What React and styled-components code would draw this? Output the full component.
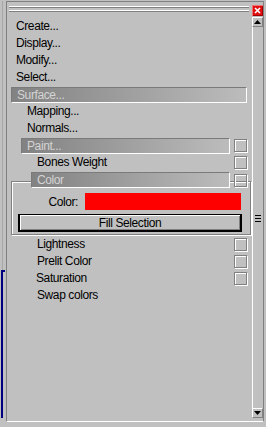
import React from 'react';
import styled, { createGlobalStyle } from 'styled-components';

const GlobalStyle = createGlobalStyle`
html, body {
  margin: 0;
  padding: 0;
  background: #c0c0c0;
}
`;

const Screen = styled.div`
width: 266px;
height: 427px;
padding-top: 1px;
box-sizing: border-box;
display: flex;
align-items: flex-start;
background: #c0c0c0;
overflow: hidden;
font-family: 'Liberation Sans', Arial, sans-serif;
font-size: 12px;
letter-spacing: -0.4px;
color: #000;
`;

const BackWindow = styled.div`
width: 6px;
height: 426px;
display: flex;
flex-direction: column;
`;

const BackEdge = styled.div`
height: 269px;
margin-left: 2px;
width: 1px;
background: #a8a8a8;
`;

const NavyFrame = styled.div`
width: 4px;
height: 148px;
box-sizing: border-box;
border-top: 2px solid #000080;
border-left: 2px solid #000080;
margin-left: 1px;
`;

const Rollout = styled.div`
width: 258px;
height: 421px;
box-sizing: border-box;
border-left: 1px solid #808080;
border-right: 1px solid #808080;
border-top: 1px solid #808080;
border-bottom: 1px solid #fff;
display: flex;
flex-direction: column;
`;

const TitleBar = styled.div`
height: 15px;
display: flex;
align-items: flex-start;
`;

const Grip = styled.div`
width: 240px;
margin: 4px 0 0 2px;
display: flex;
flex-direction: column;
gap: 2px;
`;

const GripLine = styled.div`
height: 2px;
box-sizing: border-box;
border-top: 1px solid #fff;
border-bottom: 1px solid #808080;
`;

const CloseButton = styled.div`
width: 11px;
height: 11px;
margin: 3px 0 0 3px;
display: flex;
`;

const Body = styled.div`
flex: 1;
display: flex;
`;

const Content = styled.div`
width: 245px;
padding-top: 1px;
display: flex;
flex-direction: column;
`;

const Row = styled.div`
height: 17px;
display: flex;
align-items: center;
justify-content: space-between;
`;

const Label = styled.span`
padding-left: ${p => 9 + p.$indent}px;
white-space: nowrap;
line-height: 17px;
`;

const RolloutBar = styled.div`
flex: ${p => (p.$wide ? 1 : 'none')};
width: ${p => (p.$wide ? 'auto' : `${219 - p.$level * 10}px`)};
height: 16px;
margin: 1px ${p => (p.$wide ? 5 : 0)}px 0 ${p => 4 + p.$level * 10}px;
box-sizing: border-box;
border-top: 1px solid #7a7a7a;
border-left: 1px solid #7a7a7a;
border-right: 1px solid #fff;
border-bottom: 1px solid #fff;
background: linear-gradient(to right, #828282, #bcbcbc);
color: #d4d4d4;
padding-left: 5px;
line-height: 14px;
white-space: nowrap;
`;

const Check = styled.div`
width: 14px;
height: 14px;
box-sizing: border-box;
margin-right: 4px;
margin-top: ${p => p.$drop || 0}px;
border: 1px solid;
border-color: #808080 #fff #fff #808080;
box-shadow: inset -1px -1px 0 #808080, inset 1px 1px 0 #fff;
`;

const ColorSection = styled.div`
display: flex;
flex-direction: column;
margin-bottom: 1px;
`;

const SectionHead = styled(Row)`
position: relative;
z-index: 1;
`;

const GroupBox = styled.div`
margin: -7px 1px 0 4px;
height: 54px;
box-sizing: border-box;
border: 1px solid #808080;
box-shadow: 1px 1px 0 #fff, inset 1px 1px 0 #fff;
display: flex;
flex-direction: column;
padding-top: 11px;
`;

const ColorField = styled.div`
height: 17px;
display: flex;
align-items: center;
gap: 7px;
`;

const FieldLabel = styled.span`
width: 66px;
text-align: right;
`;

const Swatch = styled.div`
width: 156px;
height: 17px;
background: ${p => p.$color};
`;

const FillButton = styled.div`
margin: 4px 0 0 6px;
width: 224px;
height: 18px;
box-sizing: border-box;
border: 1px solid #000;
border-left-width: 2px;
border-bottom-width: 2px;
border-right-width: 2px;
box-shadow: inset 1px 1px 0 #fff, inset -1px -1px 0 #808080;
display: flex;
align-items: center;
justify-content: center;
`;

const ScrollBar = styled.div`
width: 11px;
display: flex;
flex-direction: column;
padding-bottom: 3px;
`;

const ArrowButton = styled.div`
height: 10px;
box-sizing: border-box;
border-top: 1px solid #fff;
border-left: 1px solid #fff;
border-right: 1px solid #808080;
border-bottom: 1px solid #808080;
display: flex;
align-items: center;
justify-content: center;
`;

const Track = styled.div`
flex: 1;
box-sizing: border-box;
border-left: 1px solid #fff;
display: flex;
flex-direction: column;
align-items: center;
`;

const Thumb = styled.div`
margin-top: 188px;
display: flex;
flex-direction: column;
gap: 2px;
`;

const ThumbLine = styled.div`
width: 6px;
height: 1px;
background: #000;
`;

const Item = ({ indent = 0, check, children }) => (
  <Row>
    <Label $indent={indent}>{children}</Label>
    {check && <Check />}
  </Row>
);

const Triangle = ({ down }) => (
  <svg width="7" height="4" viewBox="0 0 7 4">
    <polygon points={down ? '0,0 7,0 3.5,4' : '0,4 7,4 3.5,0'} fill="#000" />
  </svg>
);

export default function App() {
  return (
    <>
      <GlobalStyle />
      <Screen>
        <BackWindow>
          <BackEdge />
          <NavyFrame />
        </BackWindow>
        <Rollout>
          <TitleBar>
            <Grip>
              <GripLine />
              <GripLine />
            </Grip>
            <CloseButton>
              <svg width="11" height="11" viewBox="0 0 11 11">
                <rect x="0" y="0" width="11" height="11" fill="#f07070" />
                <rect x="1" y="1" width="10" height="10" fill="#a00000" />
                <rect x="1" y="1" width="9" height="9" fill="#e01010" />
                <path d="M3 3 L8 8 M8 3 L3 8" stroke="#fff" strokeWidth="1.6" />
              </svg>
            </CloseButton>
          </TitleBar>
          <Body>
            <Content>
              <Item>Create...</Item>
              <Item>Display...</Item>
              <Item>Modify...</Item>
              <Item>Select...</Item>
              <Row>
                <RolloutBar $wide $level={0}>Surface...</RolloutBar>
              </Row>
              <Item indent={11}>Mapping...</Item>
              <Item indent={11}>Normals...</Item>
              <Row>
                <RolloutBar $level={1}>Paint...</RolloutBar>
                <Check />
              </Row>
              <Item indent={21} check>Bones Weight</Item>
              <ColorSection>
                <SectionHead>
                  <RolloutBar $level={2}>Color</RolloutBar>
                  <Check $drop={3} />
                </SectionHead>
                <GroupBox>
                  <ColorField>
                    <FieldLabel>Color:</FieldLabel>
                    <Swatch $color="#ff0000" />
                  </ColorField>
                  <FillButton>Fill Selection</FillButton>
                </GroupBox>
              </ColorSection>
              <Item indent={21} check>Lightness</Item>
              <Item indent={21} check>Prelit Color</Item>
              <Item indent={20} check>Saturation</Item>
              <Item indent={21}>Swap colors</Item>
            </Content>
            <ScrollBar>
              <ArrowButton><Triangle /></ArrowButton>
              <Track>
                <Thumb>
                  <ThumbLine />
                  <ThumbLine />
                  <ThumbLine />
                </Thumb>
              </Track>
              <ArrowButton><Triangle down /></ArrowButton>
            </ScrollBar>
          </Body>
        </Rollout>
      </Screen>
    </>
  );
}
